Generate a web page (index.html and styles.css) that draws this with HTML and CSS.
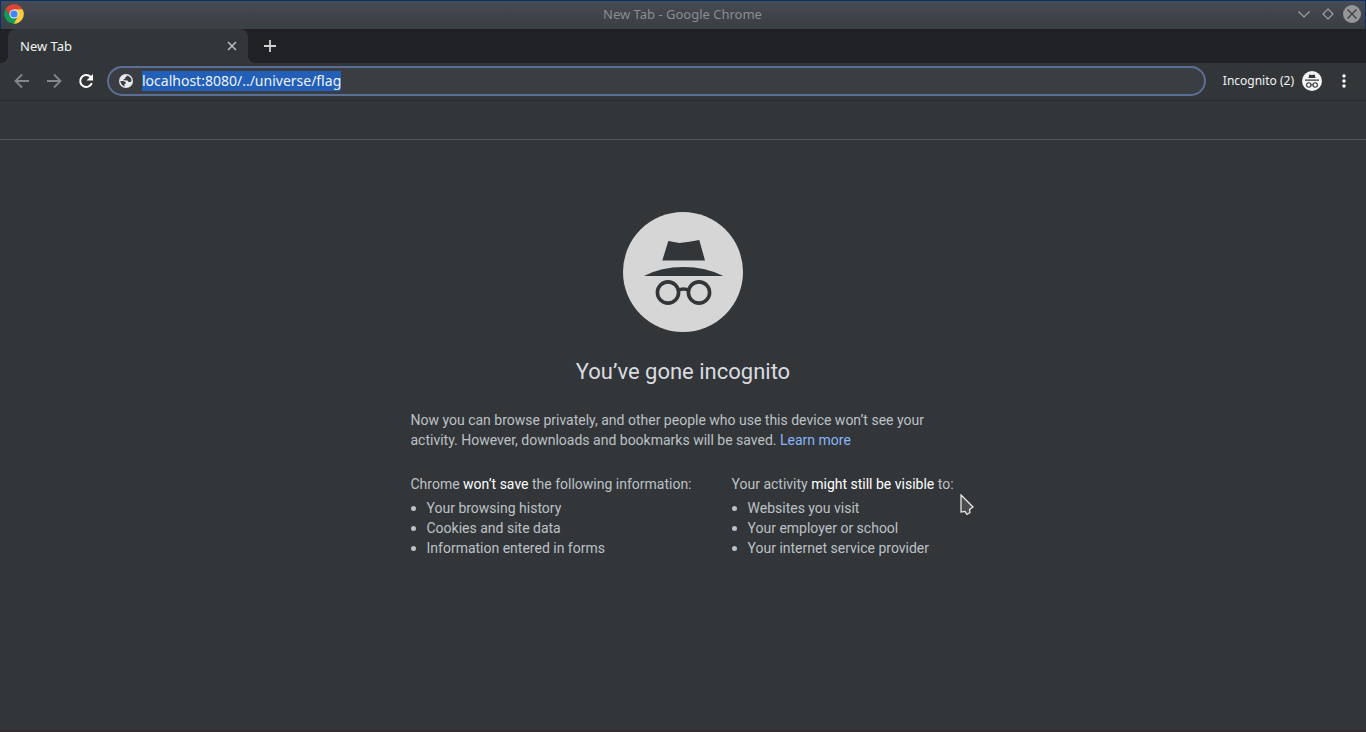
FILE: index.html
```html
<!DOCTYPE html>
<html lang="en">
<head>
<meta charset="utf-8">
<title>New Tab - Google Chrome</title>
<link rel="stylesheet" href="styles.css">
</head>
<body>
<div class="window">
  <header class="titlebar">
    <svg class="logo" viewBox="0 0 20 20" aria-hidden="true">
      <path fill="#dd4437" d="M1.6 5.1L6 12.3L10 10V5.3H18.5A9.7 9.7 0 0 0 1.6 5.1Z"/>
      <path fill="#109d58" d="M1.6 5.1A9.7 9.7 0 0 0 9.8 19.7L14 12.3L10 10L6 12.3Z"/>
      <path fill="#fccb3e" d="M18.5 5.3H10V10L14 12.3L9.8 19.7A9.7 9.7 0 0 0 18.5 5.3Z"/>
      <circle cx="10" cy="10" r="4.6" fill="#e8edf2"/>
      <circle cx="10" cy="10" r="3.6" fill="#4285f4"/>
    </svg>
    <span class="caption">New Tab - Google Chrome</span>
    <div class="window-buttons">
      <button type="button" aria-label="Minimize"><svg viewBox="0 0 18 18"><path class="thin" d="M3.5 6.5L9 12L14.5 6.5"/></svg></button>
      <button type="button" aria-label="Maximize"><svg viewBox="0 0 18 18"><path class="thin" d="M9 4L14 9L9 14L4 9Z"/></svg></button>
      <button type="button" aria-label="Close"><svg viewBox="0 0 18 18"><circle cx="9" cy="9" r="9" fill="#959697"/><path class="cross" d="M4.5 4.5L13.5 13.5M13.5 4.5L4.5 13.5"/></svg></button>
    </div>
  </header>

  <nav class="tabstrip" aria-label="Tabs">
    <div class="tab">
      <span>New Tab</span>
      <button type="button" aria-label="Close tab"><svg viewBox="0 0 16 16"><path d="M4 4L12 12M12 4L4 12" fill="none" stroke="#b9bcbf" stroke-width="1.6"/></svg></button>
    </div>
    <button type="button" class="new-tab" aria-label="New tab"><svg viewBox="0 0 16 16"><path d="M8 2V14M2 8H14" fill="none" stroke="#d0d2d4" stroke-width="1.8"/></svg></button>
  </nav>

  <div class="toolbar">
    <div class="nav-buttons">
      <button type="button" aria-label="Back"><svg viewBox="0 0 16 16"><path class="arrow" d="M15 8H2M8 1.5L1.5 8L8 14.5"/></svg></button>
      <button type="button" aria-label="Forward"><svg viewBox="0 0 16 16"><path class="arrow" d="M1 8H14M8 1.5L14.5 8L8 14.5"/></svg></button>
      <button type="button" aria-label="Reload"><svg viewBox="0 0 16 16"><path d="M13.8 10.2A6 6 0 1 1 12.5 3.8L13.5 5" fill="none" stroke="#fff" stroke-width="2"/><path d="M15 1V7.5H8.5Z" fill="#fff"/></svg></button>
    </div>
    <form class="omnibox">
      <svg viewBox="0 0 14 14" aria-hidden="true">
        <circle cx="7" cy="7" r="7" fill="#e8eaed"/>
        <path fill="#3a3e42" d="M7.2 1.4Q9.5 1.400 11 3Q12.600 4.600 12.600 7L11.500 8H9.500L8.500 6.500L4.600 6.300V5.300L6.300 4.600V3.300L7.800 2.600ZM1.400 7H4.500L6.800 8.300L6.500 10H5.500V12.400Q1.600 11 1.400 7Z"/>
      </svg>
      <input id="address" type="text" aria-label="Address and search bar" value="localhost:8080/../universe/flag" spellcheck="false" autocomplete="off" autofocus>
    </form>
    <button type="button" class="profile">
      <span>Incognito (2)</span>
      <svg viewBox="0 0 20 20" aria-hidden="true">
        <circle cx="10" cy="10" r="10" fill="#f1f3f4"/>
        <path fill="#35393c" d="M7.3 3.5L10 4L12.7 3.5L13.5 7H6.5ZM3 8.5H17V9.8H3Z"/>
        <g fill="none" stroke="#35393c" stroke-width="1.1"><circle cx="6.8" cy="14" r="2.2"/><circle cx="13.2" cy="14" r="2.2"/><path d="M9 14Q10 13 11 14"/></g>
      </svg>
    </button>
    <button type="button" class="menu" aria-label="Menu"><svg viewBox="0 0 16 16"><g fill="#fff"><circle cx="8" cy="3" r="1.7"/><circle cx="8" cy="8" r="1.7"/><circle cx="8" cy="13" r="1.7"/></g></svg></button>
  </div>
  <div class="bookmarks"></div>

  <main class="page">
    <svg class="incognito" viewBox="0 0 120 120" aria-hidden="true">
      <circle cx="60" cy="60" r="60" fill="#d6d6d6"/>
      <path fill="#323639" d="M45.3 29Q51 30 56.5 31Q66 30 76.3 28L82 48.6H39.3Z"/>
      <path fill="#323639" d="M21 64Q38 55 60.5 55Q83 55 100.3 64Z"/>
      <g fill="none" stroke="#323639" stroke-width="3.6"><circle cx="45" cy="80.5" r="10.6"/><circle cx="76" cy="80.5" r="10.6"/><path d="M55 78.5Q60.5 75.5 66 78.5"/></g>
    </svg>
    <h1>You’ve gone incognito</h1>
    <div class="content">
      <p>Now you can browse privately, and other people who use this device won’t see your activity. However, downloads and bookmarks will be saved. <a href="#">Learn more</a></p>
      <div class="columns">
        <section>
          <p>Chrome <em>won’t save</em> the following information:</p>
          <ul><li>Your browsing history</li><li>Cookies and site data</li><li>Information entered in forms</li></ul>
        </section>
        <section>
          <p>Your activity <em>might still be visible</em> to:</p>
          <ul><li>Websites you visit</li><li>Your employer or school</li><li>Your internet service provider</li></ul>
        </section>
      </div>
    </div>
  </main>
  <svg class="pointer" viewBox="0 0 14 22" aria-hidden="true"><path d="M1 1L13 13L9.5 15.5L10 18.5L7 20.5L5 17.5L1 18Z" fill="#4b4c4d" stroke="#f2f2f2" stroke-width="1.2"/></svg>
</div>
<script src="app.js"></script>
</body>
</html>
```
FILE: app.js
```js
const address = document.getElementById("address");
address.focus();
address.select();
```
FILE: styles.css
```css
* { box-sizing: border-box; }
body { margin: 0; background: #323639; font-family: "Noto Sans", sans-serif; }
button { margin: 0; padding: 0; border: 0; background: none; color: inherit; font: inherit; display: flex; align-items: center; justify-content: center; }
svg { display: block; }

.window { position: relative; min-height: 100vh; display: flex; flex-direction: column; border-bottom: 3px solid #352e33; }

.titlebar { height: 29px; display: grid; grid-template-columns: 1fr auto 1fr; align-items: center; padding: 0 4px 2px 3px; border: 1px solid #08306d; border-bottom: 0; background: linear-gradient(#484c55, #3f434a 50%, #394043); }
.logo { width: 20px; height: 20px; }
.caption { font-size: 13px; line-height: 18px; color: #8b8d8e; }
.window-buttons { display: flex; gap: 6px; justify-content: flex-end; }
.window-buttons svg { width: 18px; height: 18px; }
.thin { fill: none; stroke: #a0a2a3; stroke-width: 1.2; }
.cross { fill: none; stroke: #3c4144; stroke-width: 1.3; }

.tabstrip { height: 34px; display: flex; padding-left: 8px; gap: 14px; background: #202124; }
.tab { position: relative; width: 240px; display: flex; align-items: center; justify-content: space-between; padding: 0 8px 0 12px; border-radius: 8px 8px 0 0; background: #323639; color: #f1f3f4; font-size: 13px; line-height: 18px; }
.tab::before, .tab::after { content: ""; position: absolute; bottom: 0; width: 8px; height: 8px; }
.tab::before { left: -8px; background: radial-gradient(circle at 0 0, #202124 8px, #323639 8px); }
.tab::after { right: -8px; background: radial-gradient(circle at 100% 0, #202124 8px, #323639 8px); }
.tab svg, .new-tab svg { width: 16px; height: 16px; }

.toolbar { height: 38px; display: flex; align-items: center; padding: 0 14px 2px; border-bottom: 1px solid #28292b; }
.nav-buttons { display: flex; gap: 16px; margin-right: 13px; }
.nav-buttons svg { width: 16px; height: 16px; }
.arrow { fill: none; stroke: #85888b; stroke-width: 1.8; }
.omnibox { flex: 1; height: 30px; display: flex; align-items: center; gap: 9px; padding: 0 10px; border: 2px solid #5b6f95; border-radius: 15px; background: #3a3e42; }
.omnibox svg { width: 14px; height: 14px; }
.omnibox input { flex: 1; min-width: 0; padding: 0; border: 0; outline: 0; background: none; color: #f1f3f4; font: 14px/20px "Noto Sans", sans-serif; }
.omnibox input::selection { background: #215fb9; color: #f1f3f4; }
.profile { gap: 8px; margin-left: 17px; color: #f1f3f4; font-size: 12px; line-height: 18px; }
.profile svg { width: 20px; height: 20px; }
.menu { margin-left: 14px; }
.menu svg { width: 16px; height: 16px; }
.bookmarks { height: 39px; border-bottom: 1px solid #505457; }

.page { flex: 1; display: flex; flex-direction: column; align-items: center; padding: 72px 24px 24px; font-family: Roboto, sans-serif; font-size: 14px; line-height: 20px; color: #bdc1c6; }
.incognito { width: 120px; height: 120px; }
.page h1 { margin: 24px 0 22px; font-size: 22px; line-height: 32px; font-weight: 400; color: #dadce0; }
.page p { margin: 0; }
.page a { color: #8ab4f8; text-decoration: none; }
.page em { font-style: normal; color: #fff; }
.content { width: 100%; max-width: 545px; }
.columns { display: flex; flex-wrap: wrap; gap: 24px 40px; margin-top: 24px; }
.page ul { margin: 4px 0 0; padding: 0; list-style: none; }
.page li { display: flex; align-items: center; gap: 11px; }
.page li::before { content: ""; width: 5px; height: 5px; border-radius: 50%; background: #bdc1c6; }
.pointer { position: absolute; left: 960px; top: 494px; width: 14px; height: 22px; }
```
